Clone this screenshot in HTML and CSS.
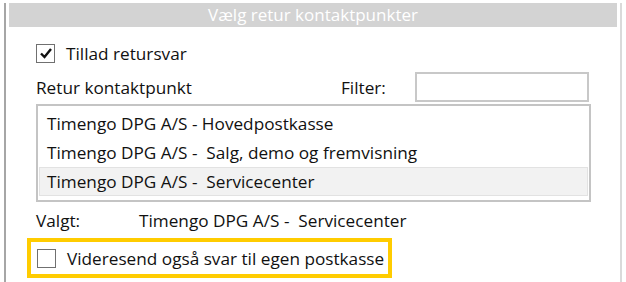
FILE: index.html
```html
<!DOCTYPE html>
<html lang="da">
<head>
    <meta charset="UTF-8">
    <title>Vælg retur kontaktpunkter</title>
    <link rel="stylesheet" href="styles.css">
</head>
<body>
    <div class="panel">
        <div class="panel-header">Vælg retur kontaktpunkter</div>
        <div class="panel-body">
            <label class="check-row">
                <span class="checkbox checked">
                    <svg width="14" height="14" viewBox="0 0 14 14"><path d="M2 7.5 L5.5 11 L12 3" fill="none" stroke="#111" stroke-width="2.4"/></svg>
                </span>
                Tillad retursvar
            </label>
            <div class="filter-row">
                <span class="label">Retur kontaktpunkt</span>
                <span class="filter-label">Filter:</span>
                <input class="filter-input" type="text">
            </div>
            <ul class="contact-list">
                <li>Timengo DPG A/S - Hovedpostkasse</li>
                <li>Timengo DPG A/S -&nbsp; Salg, demo og fremvisning</li>
                <li class="selected">Timengo DPG A/S -&nbsp; Servicecenter</li>
            </ul>
            <div class="chosen-row">
                <span class="chosen-label">Valgt:</span>
                <span>Timengo DPG A/S -&nbsp; Servicecenter</span>
            </div>
            <div class="highlight">
                <label class="check-row">
                    <span class="checkbox"></span>
                    Videresend også svar til egen postkasse
                </label>
            </div>
        </div>
    </div>
</body>
</html>
```

FILE: styles.css
```css
body {
    margin: 0;
    font-family: 'Open Sans', 'Noto Sans', sans-serif;
    font-size: 17.2px;
    color: #111;
    background-color: #fff;
}
.panel {
    margin-left: 4px;
    width: 614px;
    height: 281px;
    border-left: 2px solid #a6a6a6;
    border-right: 2px solid #dadada;
    border-bottom: 1px solid #e3e3e3;
}
.panel-header {
    margin: 3px 3px 0 3px;
    height: 24px;
    line-height: 24px;
    background-color: #d3d3d3;
    color: #fff;
    text-align: center;
    font-size: 17px;
}
.panel-body {
    padding-left: 30px;
}
.check-row {
    display: flex;
    align-items: center;
    gap: 11px;
    height: 40px;
}
.panel-body > .check-row {
    margin-top: 6px;
    height: 40px;
}
.checkbox {
    box-sizing: border-box;
    width: 19px;
    height: 19px;
    border: 1px solid #707070;
    display: flex;
    align-items: center;
    justify-content: center;
    background-color: #fff;
    flex-shrink: 0;
}
.filter-row {
    display: flex;
    align-items: center;
    height: 30px;
    margin-top: -1px;
}
.filter-row .label {
    width: 305px;
}
.filter-label {
    width: 74px;
}
.filter-input {
    width: 170px;
    height: 26px;
    border: 2px solid #c8c8c8;
    padding: 0;
    margin: 0;
}
.contact-list {
    list-style: none;
    margin: 2px 0 0 0;
    padding: 3px 1px;
    width: 549px;
    height: 88px;
    border: 2px solid #c4c4c4;
}
.contact-list li {
    height: 29px;
    line-height: 29px;
    padding-left: 8px;
    box-sizing: border-box;
}
.contact-list li.selected {
    background-color: #f2f2f2;
    border: 1px solid #e2e2e2;
    padding-left: 7px;
    line-height: 27px;
}
.chosen-row {
    display: flex;
    align-items: center;
    height: 36px;
}
.chosen-label {
    width: 103px;
}
.highlight {
    margin-left: -9px;
    width: 351px;
    height: 32px;
    border: 4px solid #ffcc00;
    padding-left: 6px;
}
.highlight .check-row {
    height: 32px;
}
```
